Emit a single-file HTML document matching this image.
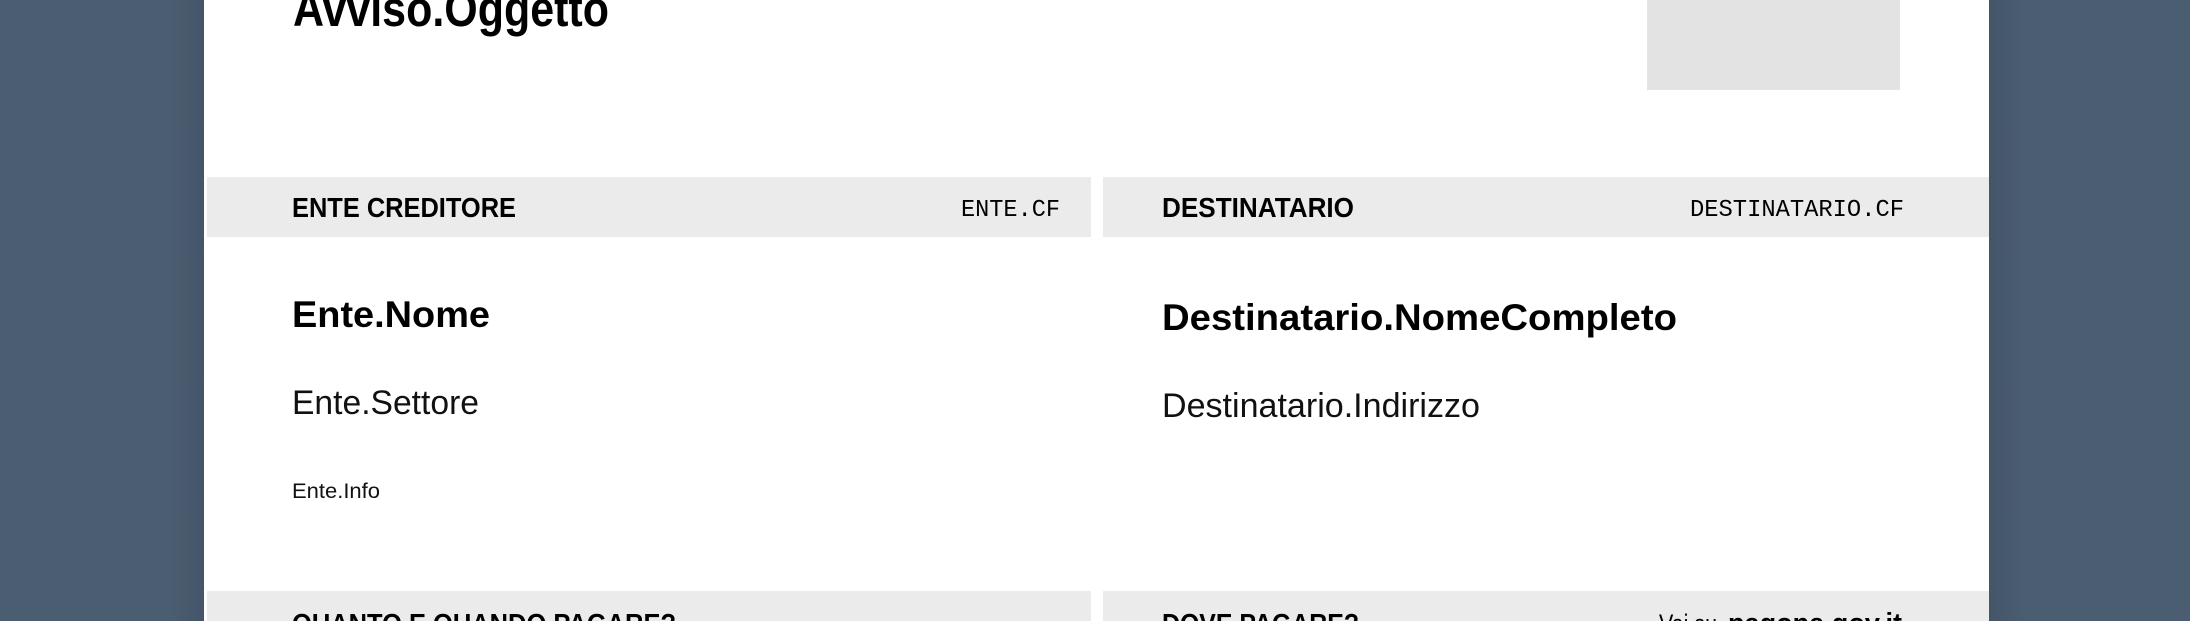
<!DOCTYPE html>
<html><head><meta charset="utf-8"><style>
html,body{margin:0;padding:0;width:2190px;height:621px;overflow:hidden;background:#4b5d70}
svg{display:block}
</style></head><body>
<svg width="2190" height="621" viewBox="0 0 2190 621" xmlns="http://www.w3.org/2000/svg">
<defs>
<linearGradient id="sl" x1="0" x2="1"><stop offset="0" stop-color="#4b5d70"/><stop offset="1" stop-color="#44556a"/></linearGradient>
<linearGradient id="sr" x1="1" x2="0"><stop offset="0" stop-color="#4b5d70"/><stop offset="1" stop-color="#44556a"/></linearGradient>
</defs>
<rect x="0" y="0" width="2190" height="621" fill="#4b5d70"/>
<rect x="170" y="0" width="34" height="621" fill="url(#sl)"/>
<rect x="1989" y="0" width="34" height="621" fill="url(#sr)"/>
<rect x="204" y="0" width="1785" height="621" fill="#fff"/>
<rect x="1647" y="0" width="253" height="90" fill="#e3e3e3"/>
<rect x="207" y="177" width="884" height="60" fill="#ebebeb"/>
<rect x="1103" y="177" width="886" height="60" fill="#ebebeb"/>
<rect x="207" y="591" width="884" height="40" fill="#ebebeb"/>
<rect x="1103" y="591" width="886" height="40" fill="#ebebeb"/>
<g font-family="Liberation Sans, sans-serif" fill="#000">
<text x="293" y="26" font-size="50" font-weight="bold" textLength="316" lengthAdjust="spacingAndGlyphs">Avviso.Oggetto</text>
<text x="292" y="217" font-size="27.5" font-weight="bold" textLength="224" lengthAdjust="spacingAndGlyphs">ENTE CREDITORE</text>
<text x="1162" y="217" font-size="27.5" font-weight="bold" textLength="192" lengthAdjust="spacingAndGlyphs">DESTINATARIO</text>
<text x="961" y="216" font-size="24" font-family="Liberation Mono, monospace" textLength="99" lengthAdjust="spacingAndGlyphs">ENTE.CF</text>
<text x="1690" y="216" font-size="24" font-family="Liberation Mono, monospace" textLength="214" lengthAdjust="spacingAndGlyphs">DESTINATARIO.CF</text>
<text x="292" y="327" font-size="37" font-weight="bold" textLength="198" lengthAdjust="spacingAndGlyphs">Ente.Nome</text>
<text x="1162" y="330" font-size="37" font-weight="bold" textLength="515" lengthAdjust="spacingAndGlyphs">Destinatario.NomeCompleto</text>
<text x="292" y="414" font-size="34" fill="#111" textLength="187" lengthAdjust="spacingAndGlyphs">Ente.Settore</text>
<text x="1162" y="417" font-size="34" fill="#111" textLength="318" lengthAdjust="spacingAndGlyphs">Destinatario.Indirizzo</text>
<text x="292" y="498" font-size="21.5" fill="#111" textLength="88" lengthAdjust="spacingAndGlyphs">Ente.Info</text>
<text x="292" y="633" font-size="28" font-weight="bold" textLength="384" lengthAdjust="spacingAndGlyphs">QUANTO E QUANDO PAGARE?</text>
<text x="1162" y="633" font-size="28" font-weight="bold" textLength="197" lengthAdjust="spacingAndGlyphs">DOVE PAGARE?</text>
<text x="1659" y="633" font-size="27" textLength="58" lengthAdjust="spacingAndGlyphs">Vai su</text>
<text x="1728" y="633" font-size="29" font-weight="bold" textLength="174" lengthAdjust="spacingAndGlyphs">pagopa.gov.it</text>
</g>
</svg>
</body></html>
